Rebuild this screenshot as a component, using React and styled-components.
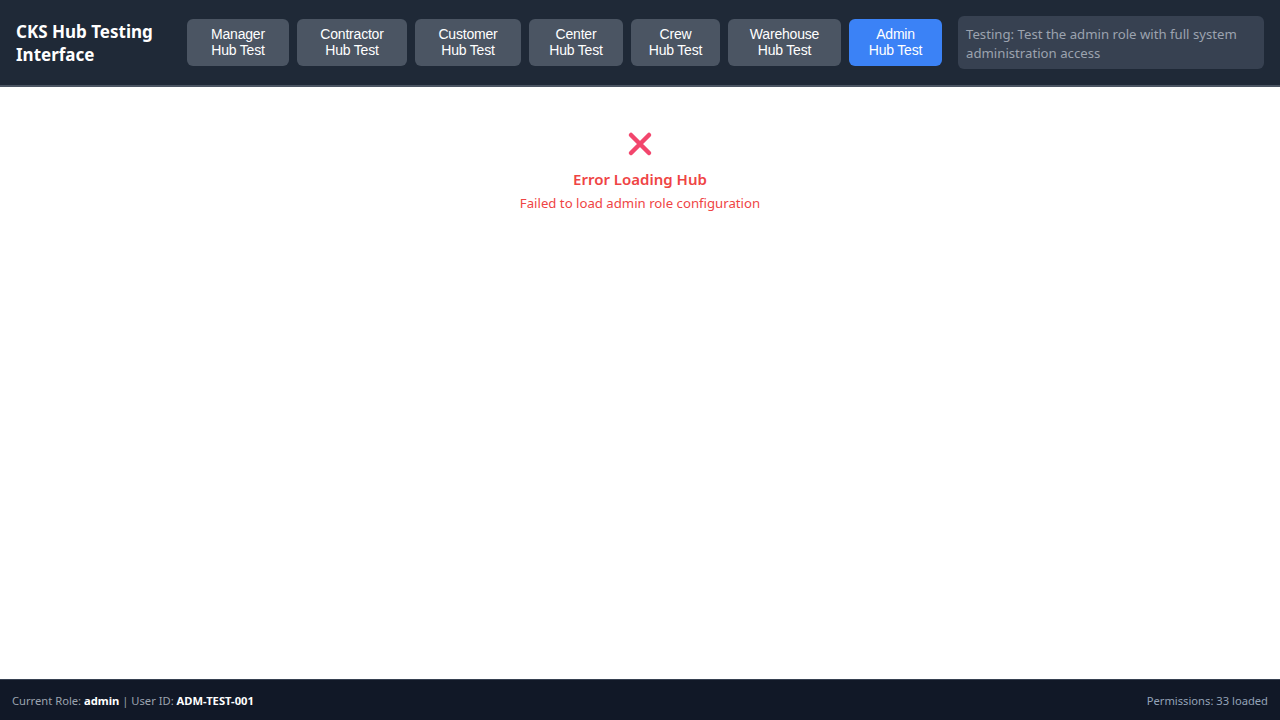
import React from "react";
import styled, {createGlobalStyle} from "styled-components";

// widths follow the way the buttons wrap in the original toolbar
const roles = [
    {key: "manager", label: "Manager", width: 102},
    {key: "contractor", label: "Contractor", width: 110},
    {key: "customer", label: "Customer", width: 106},
    {key: "center", label: "Center", width: 94},
    {key: "crew", label: "Crew", width: 89},
    {key: "warehouse", label: "Warehouse", width: 113},
    {key: "admin", label: "Admin", width: 93},
];

export default function App() {
    const current = "admin";
    return (
        <Page>
            <GlobalStyle />
            <Header>
                <Title>CKS Hub Testing Interface</Title>
                <ButtonRow>
                    {roles.map(r => (
                        <RoleButton key={r.key} $active={r.key === current} $width={r.width}>
                            {r.label}<br />Hub Test
                        </RoleButton>
                    ))}
                </ButtonRow>
                <Description>Testing: Test the admin role with full system administration access</Description>
            </Header>

            <Main>
                <ErrorBox>
                    <svg width="26" height="26" viewBox="0 0 26 26">
                        <path d="M4 4 L22 22 M22 4 L4 22" stroke="#f2466d" strokeWidth="4.5" strokeLinecap="round" />
                    </svg>
                    <ErrorTitle>Error Loading Hub</ErrorTitle>
                    <ErrorText>Failed to load admin role configuration</ErrorText>
                </ErrorBox>
            </Main>

            <Footer>
                <span>Current Role: <strong>admin</strong> | User ID: <strong>ADM-TEST-001</strong></span>
                <Permissions>Permissions: 33 loaded</Permissions>
            </Footer>
        </Page>
    );
}

const GlobalStyle = createGlobalStyle`
body {
    margin: 0;
    font-family: "Segoe UI", "Noto Sans", sans-serif;
    background: #ffffff;
}
`;

const Page = styled.div`
display: flex;
flex-direction: column;
height: 100vh;
`;

const Header = styled.header`
display: flex;
align-items: center;
height: 85px;
padding: 0 16px;
background: #1f2937;
border-bottom: 2px solid #4b5563;
`;

const Title = styled.h1`
margin: 0;
width: 171px;
font-size: 17px;
font-weight: 700;
line-height: 23px;
color: #ffffff;
`;

const ButtonRow = styled.div`
display: flex;
gap: 8px;
`;

const RoleButton = styled.button`
width: ${p => p.$width}px;
height: 47px;
padding: 0 0 2px;
border: none;
border-radius: 6px;
font-family: "Liberation Sans", Arial, sans-serif;
font-size: 14px;
line-height: 16px;
letter-spacing: -0.2px;
color: #ffffff;
background: ${p => p.$active ? "#3b82f6" : "#4b5563"};
cursor: pointer;
`;

const Description = styled.div`
margin-left: 16px;
flex: 1;
height: 53px;
box-sizing: border-box;
padding: 9px 8px 7px;
border-radius: 6px;
background: #374151;
color: #9ca3af;
font-size: 13.2px;
line-height: 19px;
`;

const Main = styled.main`
flex: 1;
display: flex;
justify-content: center;
padding-top: 44px;
`;

const ErrorBox = styled.div`
display: flex;
flex-direction: column;
align-items: center;
`;

const ErrorTitle = styled.div`
margin-top: 12px;
font-size: 15px;
font-weight: 600;
color: #ef4444;
`;

const ErrorText = styled.div`
margin-top: 5px;
font-size: 13.2px;
color: #ef4444;
`;

const Footer = styled.footer`
display: flex;
align-items: center;
justify-content: space-between;
height: 40px;
padding: 0 12px;
background: #111827;
border-top: 1px solid #374151;
font-size: 11.2px;
color: #9ca3af;

strong {
    color: #ffffff;
}
`;

const Permissions = styled.span`
color: #94a3b8;
`;
